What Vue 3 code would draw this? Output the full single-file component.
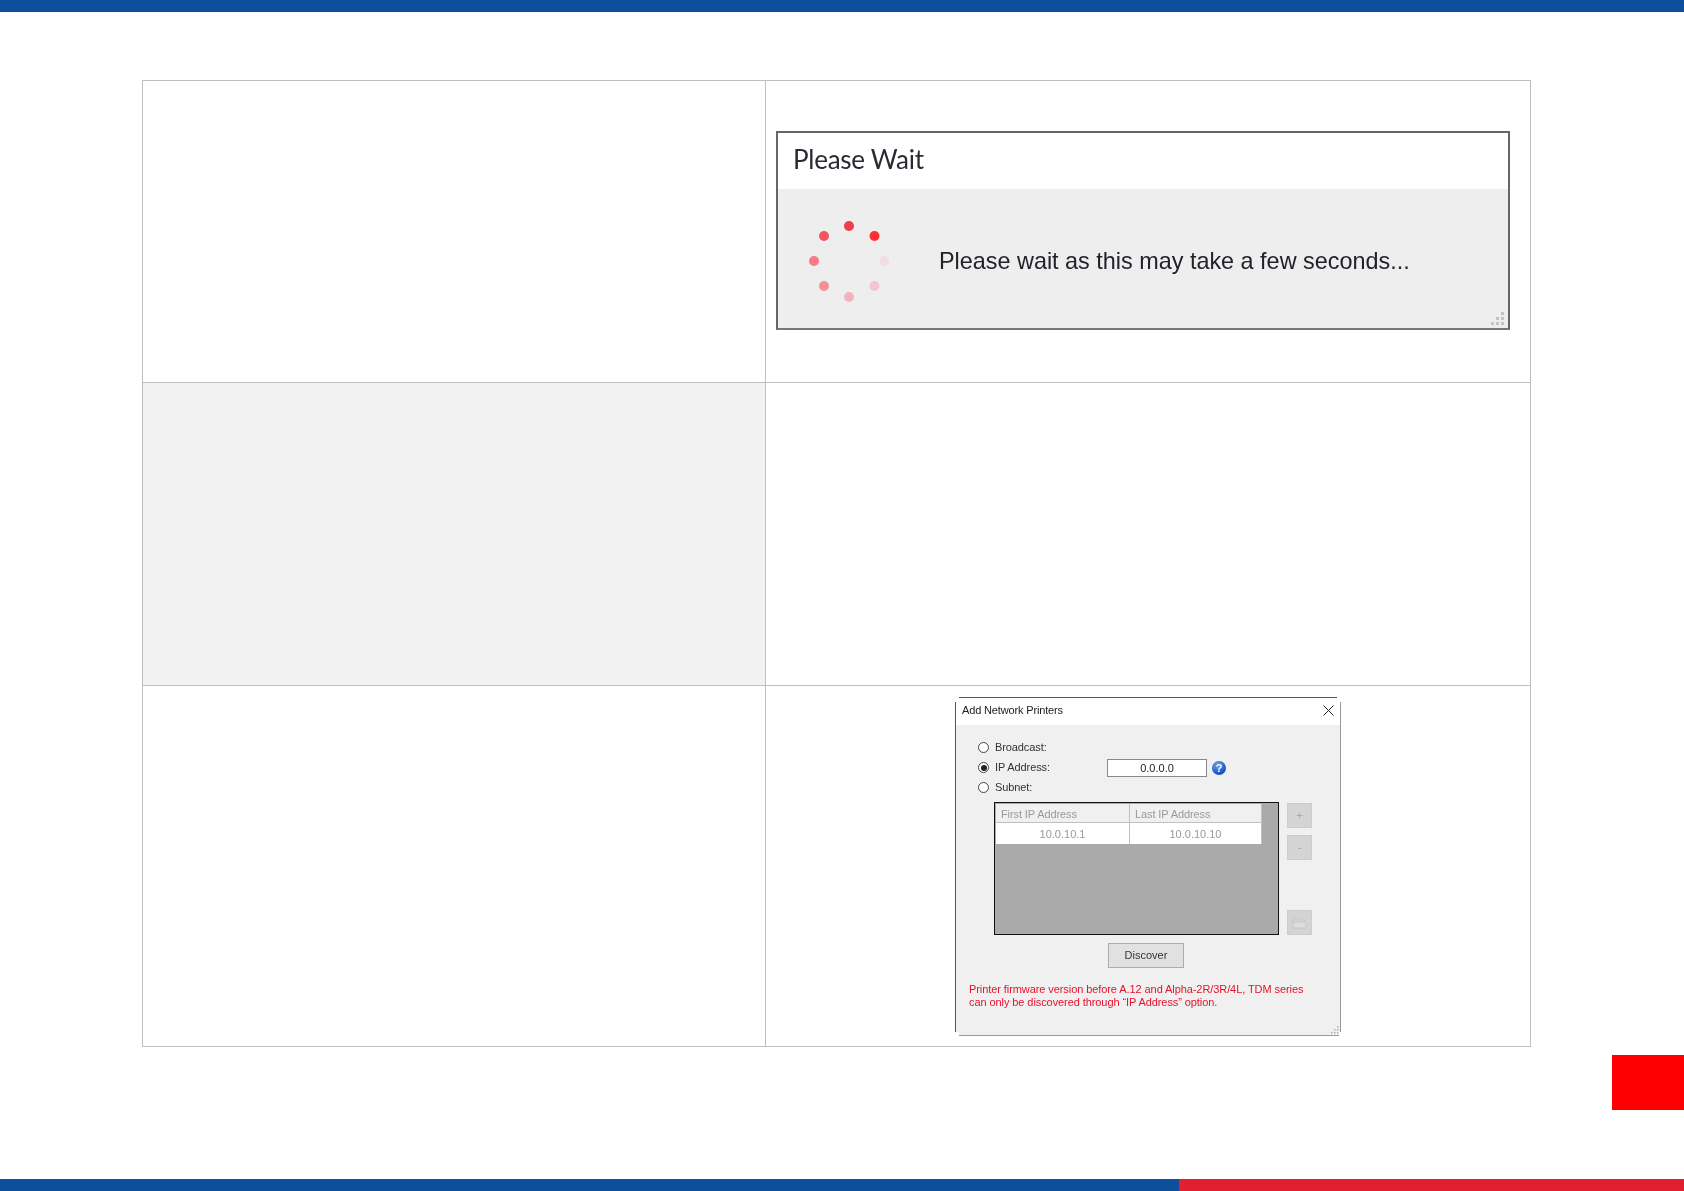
<script setup>
const dots = [
  { x: 40, y: 5, c: '#f23c4a' },
  { x: 65.5, y: 15, c: '#ff2f35' },
  { x: 75.5, y: 40, c: '#f3dde1' },
  { x: 65.5, y: 65, c: '#f2c6ce' },
  { x: 40, y: 76, c: '#f3b3bd' },
  { x: 15, y: 65, c: '#f78f9a' },
  { x: 5, y: 40, c: '#f77a86' },
  { x: 15, y: 15, c: '#f5535f' }
]
const grip = [[12, 2], [7, 7], [12, 7], [2, 12], [7, 12], [12, 12]]
const radios = [
  { label: 'Broadcast:', on: false },
  { label: 'IP Address:', on: true },
  { label: 'Subnet:', on: false }
]
</script>

<template>
  <div class="page">
    <div class="top-bar"></div>
    <main class="main">
      <div class="sheet">
        <div class="cell left"></div>
        <div class="cell right first">
          <section class="wait">
            <header class="wait-head">Please Wait</header>
            <div class="wait-body">
              <svg class="spinner" width="81" height="81" viewBox="0 0 81 81">
                <circle v-for="(d, i) in dots" :key="i" :cx="d.x" :cy="d.y" r="5" :fill="d.c" />
              </svg>
              <p class="wait-text">Please wait as this may take a few seconds...</p>
            </div>
            <svg class="grip wait-grip" width="16" height="16" viewBox="0 0 16 16">
              <rect v-for="(g, i) in grip" :key="i" :x="g[0]" :y="g[1]" width="3" height="3" fill="#c4c4c4" />
            </svg>
          </section>
        </div>
        <div class="cell left shaded"></div>
        <div class="cell right"></div>
        <div class="cell left"></div>
        <div class="cell right centered">
          <section class="net">
            <header class="net-head">
              <span class="net-title">Add Network Printers</span>
              <svg width="11" height="11" viewBox="0 0 11 11"><path d="M.5.5l10 10M10.5.5l-10 10" stroke="#222" fill="none" /></svg>
            </header>
            <div class="net-body">
              <div v-for="r in radios" :key="r.label" class="radio-row">
                <span class="radio" :class="{ on: r.on }"></span>
                <span class="radio-label">{{ r.label }}</span>
                <template v-if="r.on">
                  <span class="ip-input">0.0.0.0</span>
                  <span class="help">?</span>
                </template>
              </div>
              <div class="subnet">
                <div class="grid-box">
                  <div class="grid-table">
                    <div class="th">First IP Address</div>
                    <div class="th">Last IP Address</div>
                    <div class="td">10.0.10.1</div>
                    <div class="td">10.0.10.10</div>
                  </div>
                </div>
                <div class="side">
                  <div class="side-top">
                    <span class="side-btn">+</span>
                    <span class="side-btn">-</span>
                  </div>
                  <span class="side-btn">
                    <svg width="15" height="13" viewBox="0 0 15 13">
                      <path d="M1 2h5l1 2h6v8H1z" fill="#d6d6d6" stroke="#c8c8c8" />
                      <path d="M1 6h13v6H1z" fill="#dcdcdc" stroke="#c8c8c8" />
                    </svg>
                  </span>
                </div>
              </div>
              <button class="discover" type="button">Discover</button>
              <p class="note">Printer firmware version before A.12 and Alpha-2R/3R/4L, TDM series<br />can only be discovered through “IP Address” option.</p>
            </div>
            <svg class="grip net-grip" width="9" height="9" viewBox="0 0 9 9">
              <rect v-for="(g, i) in [[7,1],[4,4],[7,4],[1,7],[4,7],[7,7]]" :key="i" :x="g[0]" :y="g[1]" width="1.5" height="1.5" fill="#b0b0b0" />
            </svg>
          </section>
        </div>
      </div>
      <div class="tab"></div>
    </main>
    <div class="bottom-bar">
      <div class="bottom-blue"></div>
      <div class="bottom-red"></div>
    </div>
  </div>
</template>

<style>
html, body { margin: 0; background: #fff; }
</style>

<style scoped>
.page {
  width: 1684px;
  height: 1191px;
  display: flex;
  flex-direction: column;
  overflow: hidden;
  font-family: "Liberation Sans", Arial, sans-serif;
  background: #fff;
}
.top-bar { height: 12px; background: #0e4f9b; flex: none; }
.main {
  flex: 1;
  display: flex;
  flex-direction: column;
  padding-top: 68px;
}
.sheet {
  margin-left: 142px;
  width: 1389px;
  height: 967px;
  box-sizing: border-box;
  display: grid;
  grid-template-columns: 623px 1fr;
  grid-template-rows: 302px 303px 1fr;
  border-top: 1px solid #bfbfbf;
  border-left: 1px solid #bfbfbf;
}
.cell {
  border-right: 1px solid #bfbfbf;
  border-bottom: 1px solid #bfbfbf;
  box-sizing: border-box;
  min-width: 0;
}
.shaded { background: #f2f2f2; }
.first { display: flex; align-items: center; padding: 0 0 2px 10px; }
.centered { display: flex; align-items: center; justify-content: center; }

.tab {
  align-self: flex-end;
  width: 72px;
  height: 55px;
  margin-top: 8px;
  background: #ff0000;
}
.bottom-bar { height: 12px; display: flex; flex: none; }
.bottom-blue { width: 1179px; background: #0e4f9b; }
.bottom-red { flex: 1; background: #e11f30; }

/* Please wait dialog */
.wait {
  position: relative;
  width: 734px;
  height: 199px;
  box-sizing: border-box;
  border: 2px solid #666;
  border-bottom-color: #777;
  background: #eee;
  display: flex;
  flex-direction: column;
}
.wait-head {
  height: 56px;
  flex: none;
  box-sizing: border-box;
  background: #fff;
  padding: 10px 0 0 15px;
  font-family: Lato, sans-serif;
  font-size: 26px;
  line-height: 32px;
  letter-spacing: -0.25px;
  color: #2a2a33;
  filter: blur(0.5px);
}
.wait-body {
  flex: 1;
  display: flex;
  align-items: center;
  padding: 6px 0 0 31px;
}
.spinner { flex: none; filter: blur(0.4px); }
.wait-text {
  margin: 0 0 2px 49px;
  font-size: 23.4px;
  line-height: 28px;
  color: #22222a;
  white-space: nowrap;
  filter: blur(0.5px);
}
.grip { position: absolute; }
.wait-grip { right: 3px; bottom: 2px; }

/* Add network printers dialog */
.net {
  position: relative;
  width: 386px;
  height: 339px;
  box-sizing: border-box;
  border: 1px solid #9a9a9a;
  border-top-color: #555;
  border-left-color: #555;
  background: #f0f0f0;
  font-size: 11px;
  color: #333;
  display: flex;
  flex-direction: column;
}
.net::before {
  content: "";
  position: absolute;
  inset: -1px;
  pointer-events: none;
  background:
    linear-gradient(#fff, #fff) left top / 4px 5px no-repeat,
    linear-gradient(#fff, #fff) right top / 4px 5px no-repeat,
    linear-gradient(#fff, #fff) left bottom / 4px 4px no-repeat,
    linear-gradient(#fff, #fff) right bottom / 2px 4px no-repeat;
}
.net-head {
  height: 27px;
  flex: none;
  background: #fff;
  display: flex;
  align-items: center;
  justify-content: space-between;
  padding: 0 6px 0 6px;
  color: #222;
}
.net-title { letter-spacing: -0.15px; margin-bottom: 2px; filter: blur(0.3px); }
.net-head svg { flex: none; margin-bottom: 2px; }
.net-body {
  flex: 1;
  padding-top: 13px;
  display: flex;
  flex-direction: column;
  align-items: flex-start;
  filter: blur(0.35px);
}
.radio-row {
  height: 20px;
  display: flex;
  align-items: center;
  padding-left: 22px;
}
.radio {
  width: 11px;
  height: 11px;
  box-sizing: border-box;
  border: 1px solid #444;
  border-radius: 50%;
  background: #fff;
  display: flex;
  align-items: center;
  justify-content: center;
}
.radio.on::after {
  content: "";
  width: 6px;
  height: 6px;
  border-radius: 50%;
  background: #222;
}
.radio-label { width: 112px; margin: 0 0 1px 6px; letter-spacing: -0.1px; }
.ip-input {
  width: 100px;
  height: 18px;
  box-sizing: border-box;
  border: 1px solid #8a8a8a;
  background: #fff;
  text-align: center;
  line-height: 17px;
  color: #222;
}
.help {
  width: 14px;
  height: 14px;
  margin-left: 5px;
  border-radius: 50%;
  background: radial-gradient(circle at 40% 30%, #6ea6ee, #1450c0 70%);
  color: #fff;
  font-weight: 700;
  font-size: 11px;
  line-height: 14px;
  text-align: center;
}
.subnet {
  margin: 4px 0 0 38px;
  display: flex;
  gap: 8px;
}
.grid-box {
  width: 285px;
  height: 133px;
  box-sizing: border-box;
  border: 1px solid #111;
  background: #aaa;
  padding: 1px;
}
.grid-table {
  width: 266px;
  display: grid;
  grid-template-columns: 134px 1fr;
}
.th {
  height: 19px;
  box-sizing: border-box;
  background: #f0f0f0;
  border-bottom: 1px solid #c0c0c0;
  border-right: 1px solid #c0c0c0;
  padding-left: 5px;
  line-height: 20px;
  color: #9a9a9a;
  letter-spacing: -0.1px;
}
.td {
  height: 21px;
  box-sizing: border-box;
  background: #fff;
  border-right: 1px solid #c0c0c0;
  text-align: center;
  line-height: 22px;
  color: #999;
}
.side {
  height: 133px;
  padding-top: 1px;
  box-sizing: border-box;
  display: flex;
  flex-direction: column;
  justify-content: space-between;
}
.side-top { display: flex; flex-direction: column; gap: 7px; }
.side-btn {
  width: 25px;
  height: 25px;
  box-sizing: border-box;
  border: 1px solid #cdcdcd;
  background: #d4d4d4;
  color: #a8a8a8;
  display: flex;
  align-items: center;
  justify-content: center;
  line-height: 1;
}
.discover {
  margin: 8px 0 0 152px;
  width: 76px;
  height: 25px;
  padding: 0;
  box-sizing: border-box;
  border: 1px solid #adadad;
  background: #e1e1e1;
  font: inherit;
  color: #333;
}
.note {
  margin: 15px 0 0 13px;
  line-height: 13.5px;
  color: #e8112d;
  white-space: nowrap;
  letter-spacing: -0.08px;
}
.net-grip { right: 1px; bottom: 1px; }
</style>
